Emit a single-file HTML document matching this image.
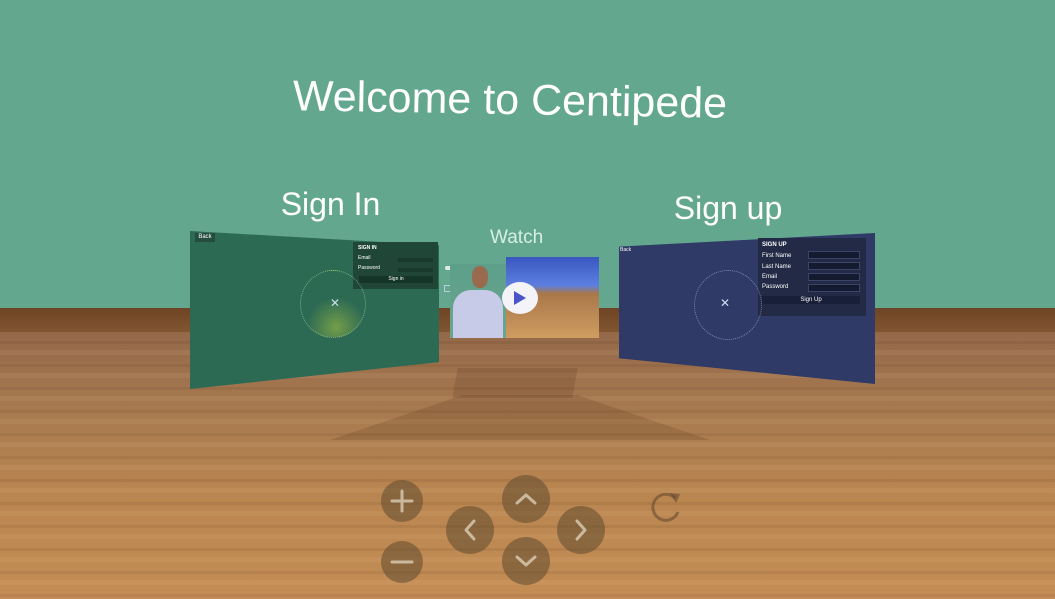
<!DOCTYPE html>
<html><head><meta charset="utf-8"><style>
html,body{margin:0;padding:0}
body{width:1055px;height:599px;position:relative;overflow:hidden;font-family:"Liberation Sans",sans-serif;background:#63a78f}
.abs{position:absolute}
.wall{left:0;top:0;width:1055px;height:308px;background:#63a78f}
.base{left:0;top:308px;width:1055px;height:24px;background:linear-gradient(#6f4426,#80552f)}
.floor{left:0;top:332px;width:1055px;height:267px;
background:
repeating-linear-gradient(180deg,rgba(0,0,0,0) 0 9px,rgba(80,45,15,.10) 9px 12px,rgba(0,0,0,0) 12px 18px,rgba(255,220,170,.08) 18px 23px),
linear-gradient(#94694a,#a87a50 30%,#b98550 60%,#c48d55)}
.shadow{background:rgba(70,40,15,.16)}
.t{color:#fff;text-align:center;white-space:nowrap}
</style></head><body>
<div class="abs wall"></div>
<div class="abs base"></div>
<div class="abs floor"></div>
<div class="abs shadow" style="left:455px;top:368px;width:120px;height:30px;transform:skewX(-10deg)"></div>
<div class="abs shadow" style="left:330px;top:395px;width:380px;height:45px;clip-path:polygon(35% 0,65% 0,100% 100%,0 100%)"></div>
<div class="abs t" style="left:292px;top:76px;font-size:43px;width:436px;transform:rotate(1deg)">Welcome to Centipede</div>
<div class="abs t" style="left:278px;top:186px;font-size:32px;width:105px">Sign In</div>
<div class="abs t" style="left:672px;top:190px;font-size:32px;width:112px">Sign up</div>
<div class="abs t" style="left:490px;top:227px;font-size:19px;color:#d8efe6">Watch</div>

<div class="abs" style="left:190px;top:231px;width:249px;height:158px;background:#2d6a54;clip-path:polygon(0 0,100% 9%,100% 83%,0 100%)"></div>
<div class="abs" style="left:195px;top:233px;width:20px;height:9px;background:#254d3f;color:#fff;font-size:6px;line-height:9px;text-align:center">Back</div>
<div class="abs" style="left:353px;top:242px;width:85px;height:47px;background:#1f4637;color:#fff;font-size:5px">
<div style="margin:3px 5px;font-weight:bold">SIGN IN</div>
<div style="margin:4px 5px">Email</div><div style="margin:3px 5px">Password</div>
<div style="position:absolute;left:45px;top:16px;width:35px;height:4px;background:#183a2c"></div>
<div style="position:absolute;left:45px;top:26px;width:35px;height:4px;background:#183a2c"></div>
<div style="position:absolute;left:6px;top:34px;width:74px;height:7px;background:#16352a;text-align:center;line-height:7px">Sign in</div></div>
<div class="abs" style="left:300px;top:270px;width:64px;height:66px;border-radius:50%;border:1px dotted rgba(180,220,170,.6);background:radial-gradient(circle at 55% 85%,rgba(200,220,60,.45),rgba(0,0,0,0) 45%)"></div>
<div class="abs" style="left:330px;top:296px;color:#cde;font-size:12px">✕</div>

<div class="abs" style="left:445px;top:266px;width:18px;height:4px;background:#dfece6;border-radius:2px"></div>
<div class="abs" style="left:444px;top:285px;width:20px;height:5px;border:1px solid #bcd"></div>
<div class="abs" style="left:450px;top:264px;width:56px;height:74px;background:linear-gradient(#5d9f8a,#6aa68f)"></div>
<div class="abs" style="left:472px;top:266px;width:16px;height:22px;border-radius:45%;background:#9a6a4e"></div>
<div class="abs" style="left:453px;top:290px;width:50px;height:48px;border-radius:18px 18px 0 0;background:#c7cbe8"></div>
<div class="abs" style="left:506px;top:257px;width:93px;height:81px;background:linear-gradient(#3a57c0 0,#5b7fe0 35%,#a9784a 45%,#cf9c60 100%)"></div>
<div class="abs" style="left:502px;top:282px;width:36px;height:32px;border-radius:50%;background:#f3f3f8"></div>
<div class="abs" style="left:514px;top:291px;width:0;height:0;border-left:12px solid #4b55c8;border-top:7px solid transparent;border-bottom:7px solid transparent"></div>

<div class="abs" style="left:619px;top:233px;width:256px;height:151px;background:#2f3a66;clip-path:polygon(0 9%,100% 0,100% 100%,0 83%)"></div>
<div class="abs" style="left:620px;top:247px;color:#fff;font-size:5px">Back</div>
<div class="abs" style="left:758px;top:238px;width:108px;height:78px;background:#222a45;color:#fff;font-size:6px">
<div style="margin:4px 4px;font-weight:bold">SIGN UP</div>
<div style="margin:5px 4px">First Name</div><div style="margin:4px 4px">Last Name</div><div style="margin:4px 4px">Email</div><div style="margin:4px 4px">Password</div>
<div style="position:absolute;left:50px;top:13px;width:50px;height:6px;background:#141a30;border:1px solid #3a4468"></div>
<div style="position:absolute;left:50px;top:24px;width:50px;height:6px;background:#141a30;border:1px solid #3a4468"></div>
<div style="position:absolute;left:50px;top:35px;width:50px;height:6px;background:#141a30;border:1px solid #3a4468"></div>
<div style="position:absolute;left:50px;top:46px;width:50px;height:6px;background:#141a30;border:1px solid #3a4468"></div>
<div style="position:absolute;left:4px;top:58px;width:98px;height:8px;background:#181f38;text-align:center;line-height:8px">Sign Up</div></div>
<div class="abs" style="left:694px;top:270px;width:66px;height:68px;border-radius:50%;border:1px dotted rgba(200,210,240,.5)"></div>
<div class="abs" style="left:720px;top:296px;color:#cde;font-size:12px">✕</div>

<svg class="abs" style="left:0;top:0" width="1055" height="599">
<g fill="rgba(95,75,45,.55)">
<circle cx="402" cy="501" r="21"/><circle cx="402" cy="562" r="21"/>
<circle cx="470" cy="530" r="24"/><circle cx="526" cy="499" r="24"/>
<circle cx="581" cy="530" r="24"/><circle cx="526" cy="561" r="24"/>
</g>
<g fill="none" stroke="#e2d5bf" stroke-width="3" stroke-linecap="round" stroke-linejoin="round" opacity=".75">
<path d="M392 501H412M402 491V511"/><path d="M392 562H412"/>
<path d="M474 521L466 530L474 539"/><path d="M577 521L585 530L577 539"/>
<path d="M517 503L526 495L535 503"/><path d="M517 557L526 565L535 557"/>
</g>
<path d="M675 498A13 13 0 1 0 678 512" fill="none" stroke="rgba(95,70,45,.55)" stroke-width="3"/>
<path d="M670 493L680 494L676 503Z" fill="rgba(95,70,45,.55)"/>
</svg>
</body></html>
